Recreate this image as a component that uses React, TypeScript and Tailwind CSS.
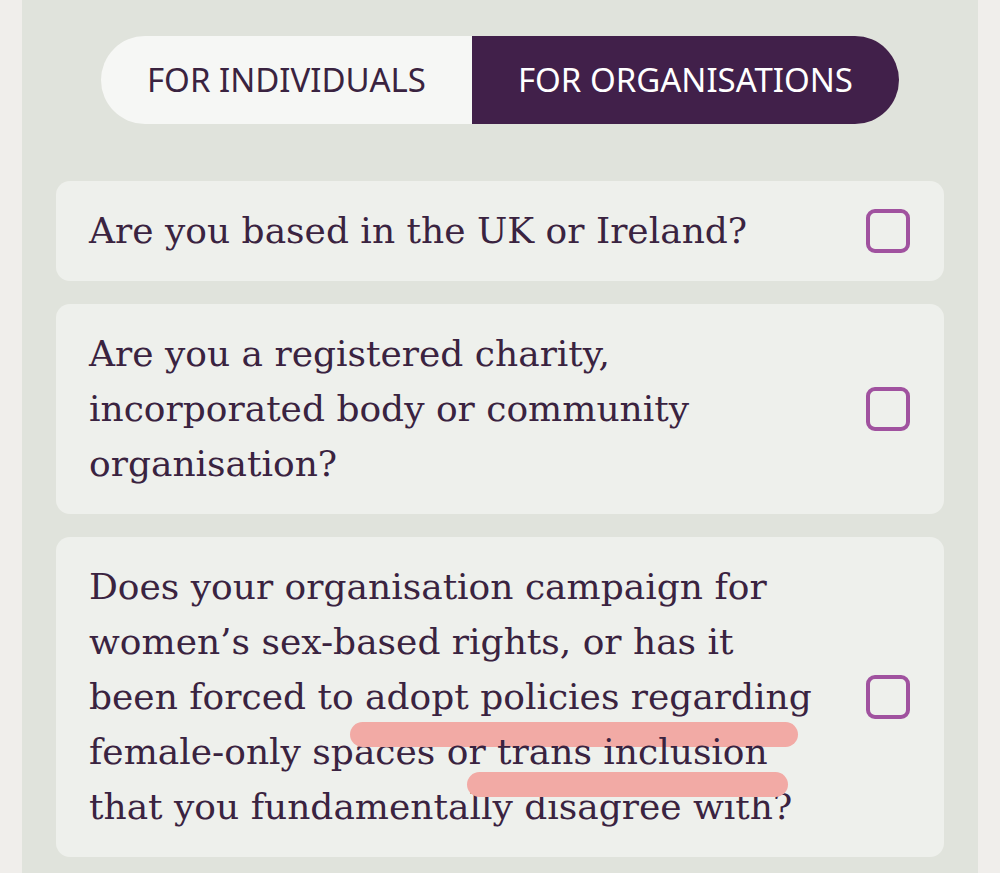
import { ReactNode } from "react";

const serif = { fontFamily: '"DejaVu Serif", "Liberation Serif", serif' };
const sans = { fontFamily: '"Noto Sans", "Open Sans", sans-serif' };

function Checkbox() {
  return <div className="w-[44px] h-[44px] shrink-0 rounded-[9px] border-[4px] border-[#a0529f]" />;
}

function Card({ children }: { children: ReactNode }) {
  return (
    <div className="flex items-center bg-[#eef0ec] rounded-[14px] pl-[33px] pr-[34px] pt-[22px] pb-[23px]">
      <p className="flex-1 text-[36px] leading-[55px] text-[#3a2340]" style={serif}>
        {children}
      </p>
      <Checkbox />
    </div>
  );
}

function Mark({ children, pos }: { children: ReactNode; pos: string }) {
  return (
    <span className="relative inline-block">
      <span className={`absolute ${pos} h-[25px] rounded-full bg-[#f2aaa5]`} />
      <span className="relative">{children}</span>
    </span>
  );
}

export default function App() {
  return (
    <div className="min-h-screen bg-[#f0eeeb] px-[22px]">
      <div className="min-h-[873px] bg-[#e0e3dc] pt-[36px] px-[34px]">
        <div className="flex justify-center" style={sans}>
          <div className="flex h-[88px] rounded-full overflow-hidden text-[33px]">
            <button className="px-[46px] bg-[#f6f7f5] text-[#3a2340]">FOR INDIVIDUALS</button>
            <button className="px-[46px] bg-[#41204a] text-white">FOR ORGANISATIONS</button>
          </div>
        </div>

        <div className="mt-[57px] flex flex-col gap-[23px]">
          <Card>Are you based in the UK or Ireland?</Card>
          <Card>
            Are you a registered charity,
            <br />
            incorporated body or community
            <br />
            organisation?
          </Card>
          <Card>
            Does your organisation campaign for
            <br />
            women’s sex-based rights, or has it
            <br />
            been forced to{" "}
            <Mark pos="left-[-15px] right-[14px] top-[53px]">adopt policies regarding</Mark>
            <br />
            female-only spaces{" "}
            <Mark pos="left-[20px] right-[-20px] top-[48px]">or trans inclusion</Mark>
            <br />
            that you fundamentally disagree with?
          </Card>
        </div>
      </div>
    </div>
  );
}
